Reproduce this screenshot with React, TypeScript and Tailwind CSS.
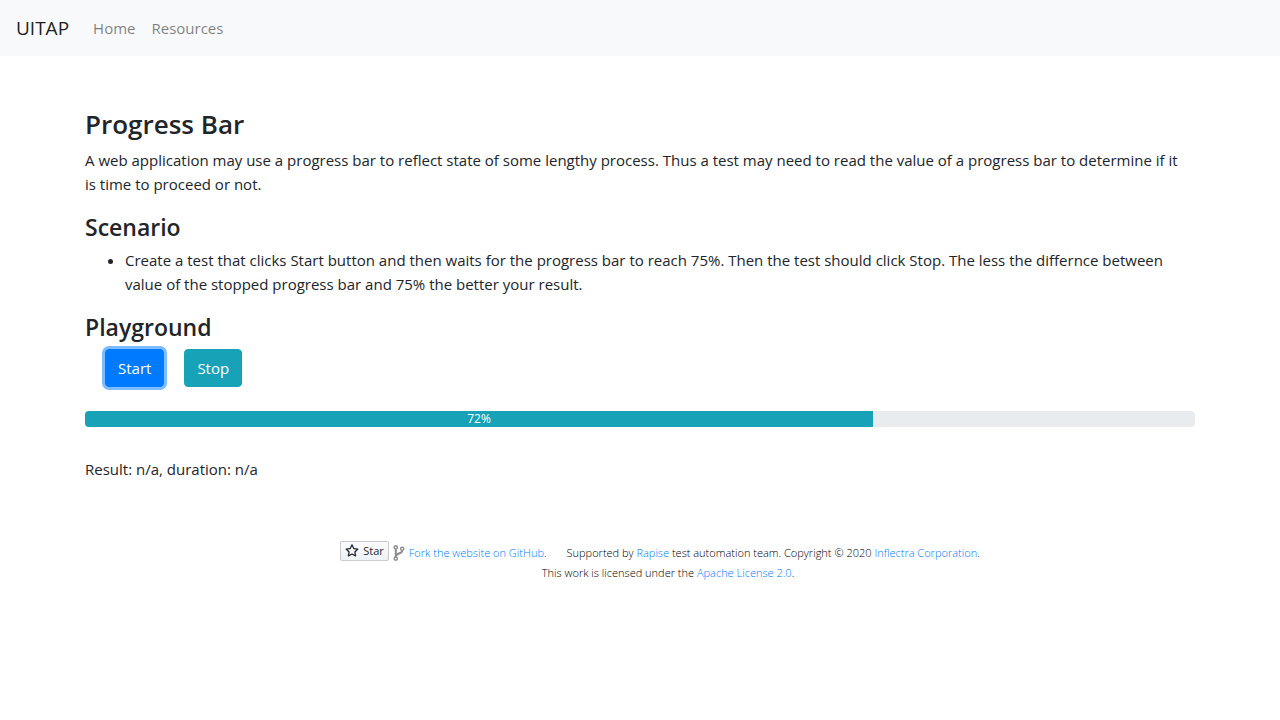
import { useState } from "react";

const link = "text-[#007bff] no-underline hover:underline";

function Navbar() {
  return (
    <nav className="flex h-14 items-center bg-[#f8f9fa] px-4">
      <a href="#" className="mr-4 text-[19px] leading-8 text-black/90">
        UITAP
      </a>
      <ul className="flex text-black/50">
        <li>
          <a href="#home" className="block p-2">
            Home
          </a>
        </li>
        <li>
          <a href="#resources" className="block p-2">
            Resources
          </a>
        </li>
      </ul>
    </nav>
  );
}

function StarIcon() {
  return (
    <svg viewBox="0 0 16 16" className="h-3.5 w-3.5" fill="currentColor" aria-hidden="true">
      <path
        fillRule="evenodd"
        d="M8 .25a.75.75 0 01.673.418l1.882 3.815 4.21.612a.75.75 0 01.416 1.279l-3.046 2.97.719 4.192a.75.75 0 01-1.088.791L8 12.347l-3.766 1.98a.75.75 0 01-1.088-.79l.72-4.194L.818 6.374a.75.75 0 01.416-1.28l4.21-.611L7.327.668A.75.75 0 018 .25zm0 2.445L6.615 5.5a.75.75 0 01-.564.41l-3.097.45 2.24 2.184a.75.75 0 01.216.664l-.528 3.084 2.769-1.456a.75.75 0 01.698 0l2.77 1.456-.53-3.084a.75.75 0 01.216-.664l2.24-2.183-3.096-.45a.75.75 0 01-.564-.41L8 2.694z"
      />
    </svg>
  );
}

function ForkIcon() {
  return (
    <svg viewBox="0 0 12 16" className="mb-0.5 h-4 w-3" fill="none" stroke="#8c8c8c" aria-hidden="true">
      <g strokeWidth="1.4">
        <circle cx="2.8" cy="2.4" r="1.6" />
        <circle cx="9.2" cy="3.8" r="1.6" />
        <circle cx="2.8" cy="13.6" r="1.6" />
      </g>
      <path strokeWidth="2" d="M2.8 4.2v7.8M9.2 5.4c0 4-6.4 2.2-6.4 6" />
    </svg>
  );
}

function Footer() {
  return (
    <footer className="mt-15 flex flex-col items-center text-[11px] leading-5 font-light text-black">
      <div className="flex h-[22px] items-end pl-10">
        <a
          href="#star"
          className="mr-1 flex h-5 items-center gap-1 self-start rounded-xs border border-[#1b1f23]/20 bg-linear-to-b from-[#fafbfc] to-[#eff3f6] px-1 text-[11px] font-normal text-[#24292e]"
        >
          <StarIcon />
          Star
        </a>
        <ForkIcon />
        <p className="ml-1 mr-5">
          <a href="#fork" className={link}>
            Fork the website on GitHub
          </a>
          .
        </p>
        <p>
          Supported by{" "}
          <a href="#rapise" className={link}>
            Rapise
          </a>{" "}
          test automation team. Copyright © 2020{" "}
          <a href="#inflectra" className={link}>
            Inflectra Corporation
          </a>
          .
        </p>
      </div>
      <p className="pl-14">
        This work is licensed under the{" "}
        <a href="#license" className={link}>
          Apache License 2.0
        </a>
        .
      </p>
    </footer>
  );
}

export default function App() {
  const [value] = useState(72);

  return (
    <div className="bg-white font-['Segoe_UI','Open_Sans',sans-serif] text-[15px] leading-6 text-[#212529]">
      <Navbar />
      <main className="mx-auto mt-12 max-w-[1140px] px-[15px]">
        <h1 className="mb-2 pt-1 text-[26px] leading-8 font-semibold">Progress Bar</h1>
        <p className="mb-4 pr-2">
          A web application may use a progress bar to reflect state of some lengthy process. Thus a
          test may need to read the value of a progress bar to determine if it is time to proceed or
          not.
        </p>
        <h2 className="mb-1.5 text-[23px] leading-[30px] font-semibold">Scenario</h2>
        <ul className="mb-4 list-disc pl-10">
          <li>
            Create a test that clicks Start button and then waits for the progress bar to reach 75%.
            Then the test should click Stop. The less the differnce between value of the stopped
            progress bar and 75% the better your result.
          </li>
        </ul>
        <h2 className="mb-[7px] text-[23px] leading-[30px] font-semibold">Playground</h2>
        <div className="mb-6 flex gap-5 pl-5">
          <button
            type="button"
            className="rounded-sm border border-[#007bff] bg-[#007bff] px-3 py-1.5 text-white ring-3 ring-[#007bff]/50"
          >
            Start
          </button>
          <button
            type="button"
            className="rounded-sm border border-[#17a2b8] bg-[#17a2b8] px-3 py-1.5 text-white"
          >
            Stop
          </button>
        </div>
        <div
          role="progressbar"
          aria-label="Progress"
          aria-valuenow={value}
          aria-valuemin={0}
          aria-valuemax={100}
          className="mb-[30px] flex h-4 overflow-hidden rounded-sm bg-[#e9ecef] text-[12px] leading-4 text-white"
        >
          <div className="w-[71%] bg-[#17a2b8] text-center">{value}%</div>
        </div>
        <p>Result: n/a, duration: n/a</p>
        <Footer />
      </main>
    </div>
  );
}
